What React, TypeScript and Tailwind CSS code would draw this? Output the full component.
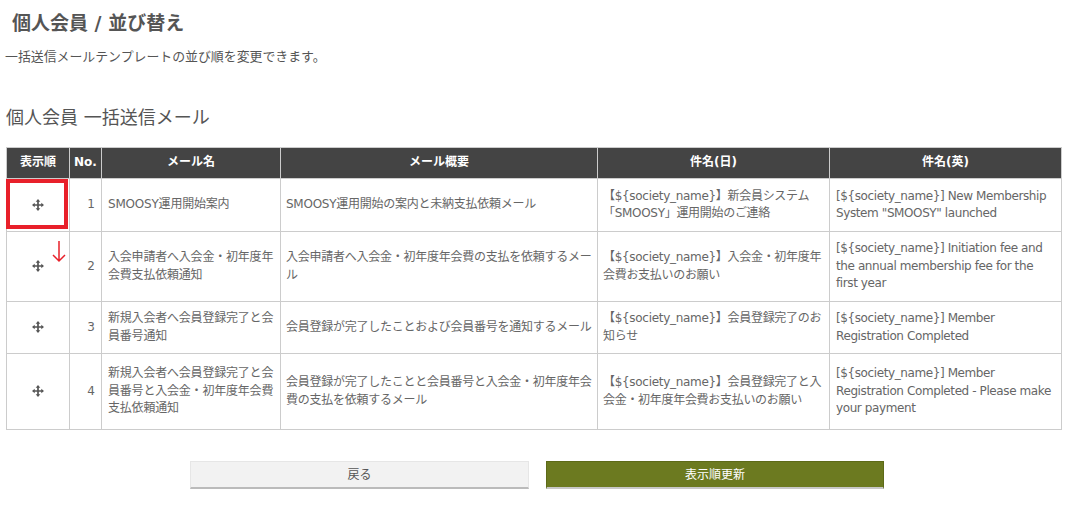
import React from 'react';

const font = { fontFamily: '"DejaVu Sans", "Noto Sans CJK JP", sans-serif' };

type Row = { no: number; name: string; summary: string; ja: string; en: string; h: string };

const rows: Row[] = [
  {
    no: 1,
    name: 'SMOOSY運用開始案内',
    summary: 'SMOOSY運用開始の案内と未納支払依頼メール',
    ja: '【${society_name}】新会員システム「SMOOSY」運用開始のご連絡',
    en: '[${society_name}] New Membership System "SMOOSY" launched',
    h: 'h-[53px]',
  },
  {
    no: 2,
    name: '入会申請者へ入会金・初年度年会費支払依頼通知',
    summary: '入会申請者へ入会金・初年度年会費の支払を依頼するメール',
    ja: '【${society_name}】入会金・初年度年会費お支払いのお願い',
    en: '[${society_name}] Initiation fee and the annual membership fee for the first year',
    h: 'h-[70px]',
  },
  {
    no: 3,
    name: '新規入会者へ会員登録完了と会員番号通知',
    summary: '会員登録が完了したことおよび会員番号を通知するメール',
    ja: '【${society_name}】会員登録完了のお知らせ',
    en: '[${society_name}] Member Registration Completed',
    h: 'h-[52px]',
  },
  {
    no: 4,
    name: '新規入会者へ会員登録完了と会員番号と入会金・初年度年会費支払依頼通知',
    summary: '会員登録が完了したことと会員番号と入会金・初年度年会費の支払を依頼するメール',
    ja: '【${society_name}】会員登録完了と入会金・初年度年会費お支払いのお願い',
    en: '[${society_name}] Member Registration Completed - Please make your payment',
    h: 'h-[76px]',
  },
];

function MoveIcon() {
  return (
    <svg width="12" height="12" viewBox="0 0 12 12" className="inline-block">
      <path d="M6 1 L6 11 M1 6 L11 6" stroke="#555" strokeWidth="1.7" />
      <path d="M6 0 L8.3 2.7 L3.7 2.7 Z M6 12 L8.3 9.3 L3.7 9.3 Z M0 6 L2.7 3.7 L2.7 8.3 Z M12 6 L9.3 3.7 L9.3 8.3 Z" fill="#555" />
    </svg>
  );
}

export default function App() {
  return (
    <div className="bg-white w-[1074px] h-[507px] overflow-hidden text-[#666]" style={font}>
      <h1 className="pt-[11px] pl-[12px] text-[19px] leading-[24px] font-bold text-[#555]">
        個人会員 / 並び替え
      </h1>
      <p className="mt-[13px] pl-[5px] text-[12.9px] leading-[17px] text-[#555]">
        一括送信メールテンプレートの並び順を変更できます。
      </p>
      <h2 className="mt-[41px] pl-[6px] text-[18px] leading-[24px] text-[#555]">
        個人会員 一括送信メール
      </h2>

      <table className="mt-[17px] ml-[6px] w-[1056px] table-fixed border-collapse text-[12px] leading-[17.5px]">
        <colgroup>
          <col className="w-[63px]" />
          <col className="w-[32px]" />
          <col className="w-[179px]" />
          <col className="w-[317px]" />
          <col className="w-[232px]" />
          <col className="w-[232px]" />
        </colgroup>
        <thead>
          <tr className="h-[31px] bg-[#444] text-white font-bold">
            {['表示順', 'No.', 'メール名', 'メール概要', '件名(日)', '件名(英)'].map((t) => (
              <th key={t} className="border border-[#ccc] px-[2px] text-center font-bold">
                {t}
              </th>
            ))}
          </tr>
        </thead>
        <tbody>
          {rows.map((r) => (
            <tr key={r.no} className={r.h}>
              <td className="relative border border-[#ccc] text-center align-middle">
                <MoveIcon />
                {r.no === 1 && (
                  <div className="absolute left-[-1px] top-[0px] w-[62px] h-[50px] border-[4px] border-[#e8202a]" />
                )}
                {r.no === 2 && (
                  <svg width="14" height="22" viewBox="0 0 14 22" className="absolute left-[45px] top-[9px]">
                    <path d="M7 0 L7 20 M1 14 L7 20 L13 14" stroke="#e8202a" strokeWidth="1.5" fill="none" />
                  </svg>
                )}
              </td>
              <td className="border border-[#ccc] pr-[6px] text-right align-middle">{r.no}</td>
              <td className="border border-[#ccc] pl-[6px] pr-0 align-middle tracking-[-0.2px]">{r.name}</td>
              <td className="border border-[#ccc] pl-[5px] pr-0 align-middle tracking-[-0.25px]">{r.summary}</td>
              <td className="border border-[#ccc] pl-[5px] pr-[1px] align-middle tracking-[-0.3px]">{r.ja}</td>
              <td className="border border-[#ccc] pl-[6px] pr-[5px] align-middle tracking-[-0.4px]">{r.en}</td>
            </tr>
          ))}
        </tbody>
      </table>

      <div className="mt-[31px] flex justify-center gap-[17px]">
        <button className="w-[339px] h-[28px] bg-[#f2f2f2] border border-[#e6e6e6] border-b-2 border-b-[#bbb] text-[12px] text-[#555]">
          戻る
        </button>
        <button className="w-[338px] h-[28px] bg-[#6c7a20] border border-[#5d6a18] border-b-2 border-b-[#c8c8c8] text-[12px] text-white">
          表示順更新
        </button>
      </div>
    </div>
  );
}
